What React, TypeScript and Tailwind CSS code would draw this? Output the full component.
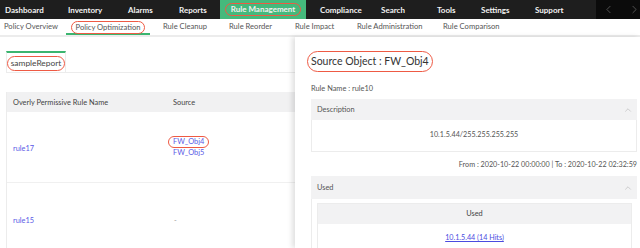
import { ChevronLeft, ChevronRight, ChevronUp } from "lucide-react"

// [label, width, padding-left]
const mainTabs: [string, string, string][] = [
  ["Dashboard", "w-[54px]", "pl-[5px]"],
  ["Inventory", "w-[60px]", "pl-[14px]"],
  ["Alarms", "w-[51px]", "pl-[14px]"],
  ["Reports", "w-[55px]", "pl-[14px]"],
  ["Rule Management", "w-[86px]", ""],
  ["Compliance", "w-[65px]", "pl-[14px]"],
  ["Search", "w-[52px]", "pl-[10px]"],
  ["Tools", "w-[45px]", "pl-[14px]"],
  ["Settings", "w-[54px]", "pl-[13px]"],
  ["Support", "w-[74px]", "pl-[13px]"],
]

const subTabs: [string, string, string][] = [
  ["Policy Overview", "w-[66px]", "pl-[4px]"],
  ["Policy Optimization", "w-[84px]", ""],
  ["Rule Cleanup", "w-[66px]", "pl-[13px]"],
  ["Rule Reorder", "w-[66px]", "pl-[13px]"],
  ["Rule Impact", "w-[62px]", "pl-[13px]"],
  ["Rule Administration", "w-[86px]", "pl-[13px]"],
  ["Rule Comparison", "w-[80px]", "pl-[13px]"],
]

function Circled({ children, className = "" }: { children: React.ReactNode; className?: string }) {
  return (
    <span className={`inline-block whitespace-nowrap rounded-full border-[1.5px] border-[#ee5a44] ${className}`}>
      {children}
    </span>
  )
}

function TopNav() {
  return (
    <div className="flex h-[19px] bg-[#1e1e1e] text-[8px] font-bold text-[#f2f2f2]">
      <div className="flex flex-1 items-center">
        {mainTabs.map(([t, w, pl]) =>
          t === "Rule Management" ? (
            <div key={t} className={`${w} flex h-full shrink-0 items-center justify-center bg-[#45b97c]`}>
              <Circled className="px-[5px] leading-[11px]">{t}</Circled>
            </div>
          ) : (
            <div key={t} className={`${w} ${pl} shrink-0 whitespace-nowrap`}>{t}</div>
          )
        )}
      </div>
      <div className="flex w-[45px] shrink-0 items-center justify-between bg-[#0b0b0b] pl-[6px] text-[#8a8a8a]">
        <ChevronLeft size={13} strokeWidth={1} />
        <ChevronRight size={13} strokeWidth={1} />
      </div>
    </div>
  )
}

function SubNav() {
  return (
    <div className="flex h-[18px] items-center border-b-[2px] border-[#ececec] text-[7.6px] text-[#555]">
      {subTabs.map(([t, w, pl]) =>
        t === "Policy Optimization" ? (
          <div key={t} className={`${w} flex h-full shrink-0 items-center justify-center border-b-[2px] border-[#3bb56f] pt-[2px]`}>
            <Circled className="px-[4px] leading-[11px]">{t}</Circled>
          </div>
        ) : (
          <div key={t} className={`${w} ${pl} shrink-0 whitespace-nowrap`}>{t}</div>
        )
      )}
    </div>
  )
}

function LeftPanel() {
  return (
    <div className="w-[295px] shrink-0 pl-[6px] pt-[14px] text-[7.4px] text-[#555]">
      <div className="flex h-[22px] border-b border-[#ececec]">
        <div className="flex w-[60px] items-center justify-center border-x border-t-[2px] border-x-[#ececec] border-t-[#3bb56f] pt-[2px]">
          <Circled className="px-[3px] text-[8.4px] leading-[13px] text-[#444]">sampleReport</Circled>
        </div>
      </div>
      <div className="mt-[19px] border-l border-[#ececec]">
        <div className="flex h-[20px] items-center bg-[#f1f1f2] pt-[2px] text-[#444]">
          <div className="w-[166px] pl-[6px]">Overly Permissive Rule Name</div>
          <div>Source</div>
        </div>
        <div className="flex h-[71px] items-center border-b border-[#f0f0f0] pt-[3px] text-[#5a5ae6]">
          <div className="w-[166px] pl-[6px]">rule17</div>
          <div className="flex flex-col items-start">
            <Circled className="-ml-[5px] mt-[-4px] px-[4px] leading-[10px]">FW_Obj4</Circled>
            <div className="leading-[10px]">FW_Obj5</div>
          </div>
        </div>
        <div className="flex h-[72px] items-center pt-[3px] text-[#5a5ae6]">
          <div className="w-[166px] pl-[6px]">rule15</div>
          <div className="pl-[1px] text-[#999]">-</div>
        </div>
      </div>
    </div>
  )
}

function Drawer() {
  return (
    <div className="relative flex-1 bg-white pl-[16px] pr-[3px] pt-[14px] text-[7.4px] text-[#555] shadow-[-3px_0_5px_rgba(0,0,0,0.12)]">
      <Circled className="-ml-[4px] px-[3px] text-[10.5px] leading-[19px] text-[#333]">Source Object : FW_Obj4</Circled>
      <div className="mt-[12px] leading-[10px]">Rule Name : rule10</div>
      <div className="mt-[5px] flex h-[21px] items-center justify-between bg-[#f2f2f3] pl-[6px] pr-[4px]">
        <span>Description</span>
        <ChevronUp size={10} strokeWidth={1} className="text-[#999]" />
      </div>
      <div className="flex h-[32px] items-center justify-center border border-t-0 border-[#ececec] text-[7.2px]">
        10.1.5.44/255.255.255.255
      </div>
      <div className="mt-[8px] text-right text-[7.2px] leading-[10px]">From : 2020-10-22 00:00:00 | To : 2020-10-22 02:32:59</div>
      <div className="mt-[6px] flex h-[23px] items-center justify-between bg-[#f2f2f3] pl-[6px] pr-[4px]">
        <span>Used</span>
        <ChevronUp size={10} strokeWidth={1} className="text-[#999]" />
      </div>
      <div className="border-l border-[#ececec] px-[5px] pt-[4px]">
        <div className="border border-[#ececec]">
          <div className="flex h-[20px] items-center justify-center bg-[#f2f2f3] text-[#444]">Used</div>
          <div className="flex h-[28px] items-center justify-center text-[7.2px] text-[#4b4bdf] underline">10.1.5.44 (14 Hits)</div>
        </div>
      </div>
    </div>
  )
}

export default function App() {
  return (
    <div className="h-[248px] w-[640px] overflow-hidden bg-white font-['Lato',sans-serif]">
      <TopNav />
      <SubNav />
      <div className="flex h-[211px]">
        <LeftPanel />
        <Drawer />
      </div>
    </div>
  )
}
